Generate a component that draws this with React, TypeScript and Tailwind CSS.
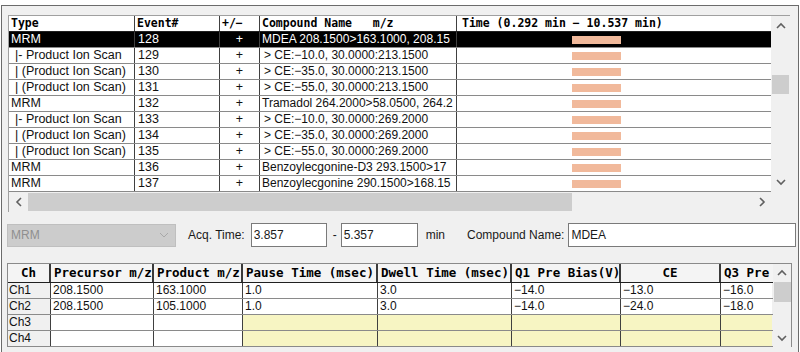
import React from "react";

const dataFont = { fontFamily: '"Liberation Sans", Arial, sans-serif' };
const monoFont = { fontFamily: '"DejaVu Sans Mono", "Liberation Mono", monospace' };
const uiFont = { fontFamily: '"Liberation Sans", Arial, sans-serif' };

type EventRow = { type: string; ev: string; name: string; sel?: boolean; indent?: boolean };

const events: EventRow[] = [
  { type: "MRM", ev: "128", name: "MDEA 208.1500>163.1000, 208.15", sel: true },
  { type: "|- Product Ion Scan", ev: "129", name: "> CE:−10.0, 30.0000:213.1500", indent: true },
  { type: "| (Product Ion Scan)", ev: "130", name: "> CE:−35.0, 30.0000:213.1500", indent: true },
  { type: "| (Product Ion Scan)", ev: "131", name: "> CE:−55.0, 30.0000:213.1500", indent: true },
  { type: "MRM", ev: "132", name: "Tramadol 264.2000>58.0500, 264.2" },
  { type: "|- Product Ion Scan", ev: "133", name: "> CE:−10.0, 30.0000:269.2000", indent: true },
  { type: "| (Product Ion Scan)", ev: "134", name: "> CE:−35.0, 30.0000:269.2000", indent: true },
  { type: "| (Product Ion Scan)", ev: "135", name: "> CE:−55.0, 30.0000:269.2000", indent: true },
  { type: "MRM", ev: "136", name: "Benzoylecgonine-D3 293.1500>17" },
  { type: "MRM", ev: "137", name: "Benzoylecgonine 290.1500>168.15" },
  { type: "", ev: "", name: "" },
];

const channels = [
  { ch: "Ch1", pre: "208.1500", prod: "163.1000", pause: "1.0", dwell: "3.0", q1: "−14.0", ce: "−13.0", q3: "−16.0" },
  { ch: "Ch2", pre: "208.1500", prod: "105.1000", pause: "1.0", dwell: "3.0", q1: "−14.0", ce: "−24.0", q3: "−18.0" },
  { ch: "Ch3", pre: "", prod: "", pause: "", dwell: "", q1: "", ce: "", q3: "", empty: true },
  { ch: "Ch4", pre: "", prod: "", pause: "", dwell: "", q1: "", ce: "", q3: "", empty: true },
];

const Chevron = ({ dir }: { dir: "up" | "down" | "left" | "right" }) => {
  const d = {
    up: "M1 6 L5 2 L9 6",
    down: "M1 2 L5 6 L9 2",
    left: "M6 1 L2 5 L6 9",
    right: "M2 1 L6 5 L2 9",
  }[dir];
  const vertical = dir === "up" || dir === "down";
  return (
    <svg width={vertical ? 10 : 8} height={vertical ? 8 : 10} viewBox={vertical ? "0 0 10 8" : "0 0 8 10"}>
      <path d={d} fill="none" stroke="#606060" strokeWidth="1.6" />
    </svg>
  );
};

const topCols = ["w-[126px]", "w-[85px]", "w-[40px]", "w-[197px]", "w-[314px]"];
const botCols = ["w-[43px]", "w-[103px]", "w-[89px]", "w-[135px]", "w-[134px]", "w-[109px]", "w-[100px]", "w-[51px]"];

export default function App() {
  return (
    <div className="w-[800px] h-[352px] bg-white pt-[5px] px-[1px] overflow-hidden">
      <div className="h-[347px] border-t border-l border-r border-[#6b6b6b] bg-[#f0f0f0] pt-[9px]">
        {/* event list */}
        <div className="ml-[6px] w-[782px] border-t border-l border-[#a0a0a0] flex">
          <div className="w-[763px] flex flex-col">
            <div className="h-[176px] overflow-hidden bg-white">
              <div className="flex h-[16px] border-b border-[#202020] text-[11.5px] font-bold leading-[15px] text-black" style={monoFont}>
                <div className={`${topCols[0]} border-r border-[#404040] pl-[2px]`}>Type</div>
                <div className={`${topCols[1]} border-r border-[#404040] pl-[2px]`}>Event#</div>
                <div className={`${topCols[2]} border-r border-[#404040] pl-[2px]`}>+/−</div>
                <div className={`${topCols[3]} border-r border-[#404040] pl-[2px] whitespace-pre overflow-hidden`}>Compound Name   m/z</div>
                <div className={`${topCols[4]} pl-[5px]`}>Time (0.292 min − 10.537 min)</div>
              </div>
              {events.map((r, i) => (
                <div
                  key={i}
                  className={`flex h-[16px] border-b border-[#8a8a8a] text-[12.5px] leading-[15px] whitespace-nowrap ${
                    r.sel ? "bg-black text-white" : "text-[#111]"
                  }`}
                  style={dataFont}
                >
                  <div className={`${topCols[0]} border-r border-[#404040] overflow-hidden ${r.indent ? "pl-[6px]" : "pl-[2px]"}`}>{r.type}</div>
                  <div className={`${topCols[1]} border-r border-[#404040] pl-[3px]`}>{r.ev}</div>
                  <div className={`${topCols[2]} border-r border-[#404040] text-center`}>{r.ev ? "+" : ""}</div>
                  <div className={`${topCols[3]} border-r border-[#404040] overflow-hidden text-[12px] ${r.indent ? "pl-[4px]" : "pl-[2px]"}`}>{r.name}</div>
                  <div className={`${topCols[4]} pl-[115px] pt-[4px]`}>
                    {r.ev && <div className="w-[49px] h-[8px] bg-[#f1b99b]" />}
                  </div>
                </div>
              ))}
            </div>
            {/* horizontal scrollbar */}
            <div className="h-[20px] flex items-center bg-[#f0f0f0]">
              <div className="w-[19px] flex justify-center">
                <Chevron dir="left" />
              </div>
              <div className="w-[544px] h-[18px] bg-[#cdcdcd]" />
              <div className="flex-1" />
              <div className="w-[19px] flex justify-center">
                <Chevron dir="right" />
              </div>
            </div>
          </div>
          {/* vertical scrollbar */}
          <div className="w-[19px] h-[176px] flex flex-col items-center bg-[#f0f0f0]">
            <div className="h-[20px] flex items-center">
              <Chevron dir="up" />
            </div>
            <div className="mt-[39px] w-[17px] h-[19px] bg-[#cdcdcd]" />
            <div className="flex-1" />
            <div className="h-[20px] flex items-center">
              <Chevron dir="down" />
            </div>
          </div>
        </div>

        {/* controls */}
        <div className="mt-[11px] ml-[5px] h-[24px] flex items-center text-[12px] text-[#1a1a1a] whitespace-nowrap" style={uiFont}>
          <div className="shrink-0 w-[169px] h-[23px] bg-[#cccccc] border border-[#bfbfbf] flex items-center justify-between pl-[3px] pr-[6px] text-[#8f8f8f]">
            <span>MRM</span>
            <svg width="10" height="6" viewBox="0 0 10 6">
              <path d="M1 1 L5 5 L9 1" fill="none" stroke="#a8a8a8" strokeWidth="1" />
            </svg>
          </div>
          <span className="shrink-0 ml-[12px]">Acq. Time:</span>
          <div className="shrink-0 ml-[6px] w-[76px] h-[24px] bg-white border border-[#7a7a7a] flex items-center pl-[2px]">3.857</div>
          <span className="shrink-0 ml-[6px]">-</span>
          <div className="shrink-0 ml-[4px] w-[77px] h-[24px] bg-white border border-[#7a7a7a] flex items-center pl-[2px]">5.357</div>
          <span className="shrink-0 ml-[8px]">min</span>
          <span className="shrink-0 ml-[22px]">Compound Name:</span>
          <div className="shrink-0 ml-[4px] w-[228px] h-[24px] bg-white border border-[#7a7a7a] flex items-center pl-[2px]">MDEA</div>
        </div>

        {/* channel table */}
        <div className="mt-[16px] ml-[5px] w-[785px] border-t border-l border-[#8a8a8a] flex">
          <div className="w-[765px] flex flex-col">
            <div className="flex h-[19px] border-b border-[#202020] bg-[#f4f4f4] text-[12.5px] font-bold leading-[18px] text-black whitespace-nowrap" style={monoFont}>
              {["Ch", "Precursor m/z", "Product m/z", "Pause Time (msec)", "Dwell Time (msec)", "Q1 Pre Bias(V)", "CE", "Q3 Pre"].map((h, i) => (
                <div
                  key={h}
                  className={`${botCols[i]} ${i < 7 ? "border-r-2 border-[#3a3a3a]" : ""} overflow-hidden ${
                    i === 0 || i === 6 ? "text-center" : "pl-[3px]"
                  }`}
                >
                  {h}
                </div>
              ))}
            </div>
            {channels.map((c) => {
              const vals = [c.pre, c.prod, c.pause, c.dwell, c.q1, c.ce, c.q3];
              return (
                <div key={c.ch} className="flex h-[16px] border-b border-[#8a8a8a] text-[12px] leading-[15px] text-[#111]" style={dataFont}>
                  <div className={`${botCols[0]} border-r border-[#404040] bg-[#f0f0f0] pl-[1px]`}>{c.ch}</div>
                  {vals.map((v, i) => (
                    <div
                      key={i}
                      className={`${botCols[i + 1]} ${i < 6 ? "border-r border-[#404040]" : ""} pl-[2px] overflow-hidden ${
                        c.empty && i >= 2 ? "bg-[#f7f5c3]" : "bg-white"
                      }`}
                    >
                      {v}
                    </div>
                  ))}
                </div>
              );
            })}
          </div>
          <div className="w-[19px] flex flex-col items-center bg-[#f0f0f0] border-r border-[#8a8a8a]">
            <div className="h-[18px] flex items-center">
              <Chevron dir="up" />
            </div>
            <div className="w-[17px] h-[20px] bg-[#cdcdcd]" />
            <div className="flex-1" />
            <div className="h-[18px] flex items-center">
              <Chevron dir="down" />
            </div>
          </div>
        </div>
      </div>
    </div>
  );
}
